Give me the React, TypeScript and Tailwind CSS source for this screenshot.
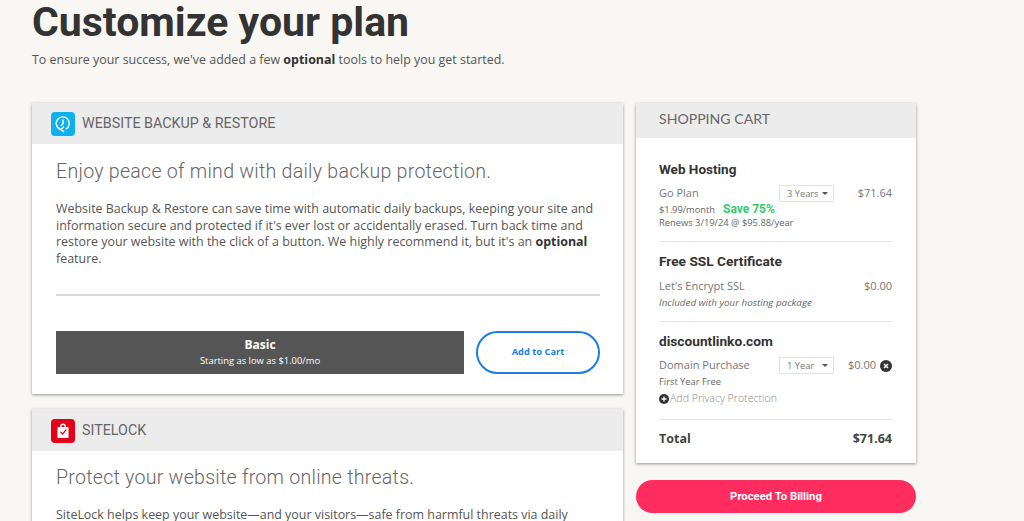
function BackupIcon() {
  return (
    <div className="flex h-6 w-6 items-center justify-center rounded-[4px] bg-[#0fb0ee]">
      <svg viewBox="0 0 24 24" className="h-5 w-5" fill="none" stroke="white" strokeWidth="1.7" strokeLinecap="round" strokeLinejoin="round">
        <path d="M9.2 18.6A7.8 7.8 0 1 1 15.6 18" />
        <path d="M12 7v4.6l-1.8 1.8" />
        <path d="M12.6 15.8l-3.4 2.8 3.6 2.6" />
      </svg>
    </div>
  );
}

function LockIcon() {
  return (
    <div className="flex h-6 w-6 items-center justify-center rounded-[4px] bg-[#e2001a]">
      <svg viewBox="0 0 24 24" className="h-[18px] w-[18px]" fill="none" stroke="white" strokeWidth="1.8" strokeLinecap="round" strokeLinejoin="round">
        <path d="M9 7.5V6a3 3 0 0 1 6 0v1.5" />
        <path d="M5.5 7.5h13v13h-13z" fill="white" />
        <path d="M9 13.5l2.4 2.6L16 10.5" stroke="#e2001a" />
      </svg>
    </div>
  );
}

function CardHeader({ icon, title, tall = false }: Readonly<{ icon: React.ReactNode; title: string; tall?: boolean }>) {
  return (
    <div className={`flex items-center gap-[7px] bg-[#ececec] pl-[19px] ${tall ? "h-[42px] pt-px" : "h-[41px]"}`}>
      {icon}
      <span className="font-['Roboto'] text-[14.3px] text-[#666]">{title}</span>
    </div>
  );
}

function YearSelect({ label }: Readonly<{ label: string }>) {
  return (
    <div className="flex h-[17px] w-[55px] shrink-0 items-center justify-between border border-[#e2e2e2] pl-[7px] pr-[5px] text-[9.3px] text-[#777]">
      <span>{label}</span>
      <svg viewBox="0 0 8 4" className="h-[3px] w-[6px] fill-[#555]">
        <path d="M0 0h8L4 4z" />
      </svg>
    </div>
  );
}

export default function App() {
  return (
    <div className="flex h-[521px] flex-col overflow-hidden bg-[#f8f7f4] pl-8 font-['Open_Sans',sans-serif] text-[#444]">
      <h1 className="h-[49px] shrink-0 font-['Roboto',sans-serif] text-[41px] font-bold leading-[44px] text-[#333]">
        Customize your plan
      </h1>
      <p className="h-[54px] shrink-0 pt-[2px] text-[12.45px] leading-[18px] text-[#555]">
        To ensure your success, we've added a few <b className="text-[#333]">optional</b> tools to help you get started.
      </p>
      <div className="flex shrink-0 items-start gap-[13px]">
        <div className="flex w-[591px] flex-col gap-[15px]">
          <section className="h-[291px] bg-white shadow-[0_1px_3px_rgba(0,0,0,0.4)]">
            <CardHeader icon={<BackupIcon />} title="WEBSITE BACKUP & RESTORE" />
            <div className="pl-6 pr-[23px] pt-4">
              <h2 className="font-['Roboto',sans-serif] text-[19.6px] font-light leading-[24px] tracking-[0.25px] text-[#666]">
                Enjoy peace of mind with daily backup protection.
              </h2>
              <p className="mt-[17px] text-[12.45px] leading-[16.7px] text-[#555]">
                Website Backup &amp; Restore can save time with automatic daily backups, keeping your site and information secure and protected if it's ever lost or accidentally erased. Turn back time and restore your website with the click of a button. We highly recommend it, but it's an <b className="text-[#333]">optional</b> feature.
              </p>
              <div className="mt-[26px] h-[2px] bg-[#d8d8d8]" />
              <div className="mt-[35px] flex items-center gap-[12px]">
                <div className="flex h-[43px] w-[408px] flex-col items-center justify-center bg-[#555] pt-px text-white">
                  <span className="text-[12px] font-bold leading-[16px]">Basic</span>
                  <span className="text-[9.4px] leading-[15px]">Starting as low as $1.00/mo</span>
                </div>
                <button className="h-[43px] w-[124px] rounded-[22px] border-2 border-[#1a7ee6] bg-white text-[9.3px] font-bold text-[#1a7ee6]">
                  Add to Cart
                </button>
              </div>
            </div>
          </section>
          <section className="h-[200px] bg-white shadow-[0_1px_3px_rgba(0,0,0,0.4)]">
            <CardHeader icon={<LockIcon />} title="SITELOCK" tall />
            <div className="pl-6 pr-[23px] pt-[15px]">
              <h2 className="font-['Roboto',sans-serif] text-[19.6px] font-light leading-[24px] tracking-[0.25px] text-[#666]">
                Protect your website from online threats.
              </h2>
              <p className="mt-[17px] text-[12.45px] leading-[16.7px] text-[#555]">
                SiteLock helps keep your website—and your visitors—safe from harmful threats via daily
              </p>
            </div>
          </section>
        </div>
        <div className="flex w-[280px] flex-col gap-[17px]">
          <section className="h-[360px] bg-white shadow-[0_1px_3px_rgba(0,0,0,0.4)]">
            <div className="flex h-[35px] items-center bg-[#ececec] pb-[3px] pl-[23px] font-['Lato',sans-serif] text-[14.1px] text-[#666]">
              SHOPPING CART
            </div>
            <div className="pl-[23px] pr-6">
              <div className="h-[104px] border-b border-[#e6e6e6] pt-[23px]">
                <h3 className="font-['Roboto',sans-serif] text-[13.5px] font-bold leading-[16px] text-[#333]">Web Hosting</h3>
                <div className="mt-2 flex items-center">
                  <span className="w-[120px] shrink-0 text-[11px] text-[#777]">Go Plan</span>
                  <YearSelect label="3 Years" />
                  <span className="ml-auto text-[11px] text-[#777]">$71.64</span>
                </div>
                <div className="flex items-center text-[9.3px] leading-[15px] text-[#666]">
                  $1.99/month
                  <span className="ml-2 font-['Roboto',sans-serif] text-[12px] font-bold text-[#2ecc71]">Save 75%</span>
                </div>
                <div className="text-[9.35px] leading-[12px] text-[#666]">Renews 3/19/24 @ $95.88/year</div>
              </div>
              <div className="h-[80px] border-b border-[#e6e6e6] pt-[11px]">
                <h3 className="font-['Roboto',sans-serif] text-[13.7px] font-bold leading-[16px] text-[#333]">Free SSL Certificate</h3>
                <div className="mt-[9px] flex items-center justify-between text-[11px] text-[#777]">
                  <span>Let's Encrypt SSL</span>
                  <span>$0.00</span>
                </div>
                <div className="text-[9.8px] italic leading-[15px] text-[#666]">Included with your hosting package</div>
              </div>
              <div className="h-[98px] border-b border-[#e6e6e6] pt-[11px]">
                <h3 className="font-['Roboto',sans-serif] text-[13.7px] font-bold leading-[16px] text-[#333]">discountlinko.com</h3>
                <div className="mt-2 flex items-center">
                  <span className="w-[120px] shrink-0 text-[11px] text-[#777]">Domain Purchase</span>
                  <YearSelect label="1 Year" />
                  <span className="ml-[14px] text-[11px] text-[#777]">$0.00</span>
                  <svg viewBox="0 0 12 12" className="ml-auto h-3 w-3 shrink-0">
                    <circle cx="6" cy="6" r="6" fill="#333" />
                    <path d="M4 4l4 4M8 4l-4 4" stroke="white" strokeWidth="1.5" />
                  </svg>
                </div>
                <div className="text-[9.3px] leading-[15px] text-[#666]">First Year Free</div>
                <div className="mt-[2px] flex items-center gap-[1px] text-[10.6px] font-light leading-[15px] text-[#888]">
                  <svg viewBox="0 0 10 10" className="h-[10px] w-[10px]">
                    <circle cx="5" cy="5" r="5" fill="#333" />
                    <path d="M5 2.5v5M2.5 5h5" stroke="white" strokeWidth="1.3" />
                  </svg>
                  Add Privacy Protection
                </div>
              </div>
              <div className="flex h-[38px] items-center justify-between text-[12.5px] font-bold text-[#444]">
                <span>Total</span>
                <span>$71.64</span>
              </div>
            </div>
          </section>
          <button className="h-[33px] rounded-[17px] bg-[#ff2d5f] pt-px font-['Roboto',sans-serif] text-[11.3px] font-bold text-white">
            Proceed To Billing
          </button>
        </div>
      </div>
    </div>
  );
}
